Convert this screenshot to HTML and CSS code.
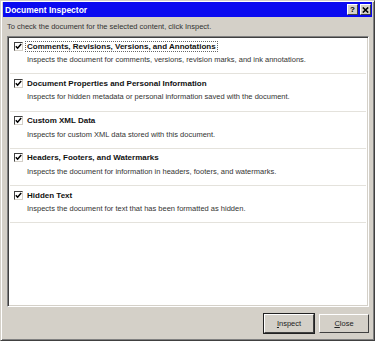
FILE: index.html
```html
<!DOCTYPE html>
<html>
	<head>
		<title>Document Inspector</title>
		<meta charset="UTF-8">
		<link rel="stylesheet" href="styles.css">
	</head>
	<body>
		<div class="window">
			<div class="titleBar">
				<span class="titleText">Document Inspector</span>
				<div class="titleButtons">
					<div class="titleButton">?</div>
					<div class="titleButton">
						<svg width="7" height="6" viewBox="0 0 7 6"><path d="M0.8 0.5 L6.2 5.5 M6.2 0.5 L0.8 5.5" stroke="#000" stroke-width="1.6"/></svg>
					</div>
				</div>
			</div>
			<div class="content">
				<p class="intro">To check the document for the selected content, click Inspect.</p>
				<div class="panel">
					<div class="item">
						<div class="itemHead">
							<span class="check"><svg width="7" height="7" viewBox="0 0 7 7"><path d="M0.8 3.2 L2.6 5.2 L6.2 1" stroke="#000" stroke-width="1.5" fill="none"/></svg></span>
							<span class="itemTitle focused">Comments, Revisions, Versions, and Annotations</span>
						</div>
						<p class="itemDesc">Inspects the document for comments, versions, revision marks, and ink annotations.</p>
					</div>
					<div class="item">
						<div class="itemHead">
							<span class="check"><svg width="7" height="7" viewBox="0 0 7 7"><path d="M0.8 3.2 L2.6 5.2 L6.2 1" stroke="#000" stroke-width="1.5" fill="none"/></svg></span>
							<span class="itemTitle">Document Properties and Personal Information</span>
						</div>
						<p class="itemDesc">Inspects for hidden metadata or personal information saved with the document.</p>
					</div>
					<div class="item">
						<div class="itemHead">
							<span class="check"><svg width="7" height="7" viewBox="0 0 7 7"><path d="M0.8 3.2 L2.6 5.2 L6.2 1" stroke="#000" stroke-width="1.5" fill="none"/></svg></span>
							<span class="itemTitle">Custom XML Data</span>
						</div>
						<p class="itemDesc">Inspects for custom XML data stored with this document.</p>
					</div>
					<div class="item">
						<div class="itemHead">
							<span class="check"><svg width="7" height="7" viewBox="0 0 7 7"><path d="M0.8 3.2 L2.6 5.2 L6.2 1" stroke="#000" stroke-width="1.5" fill="none"/></svg></span>
							<span class="itemTitle">Headers, Footers, and Watermarks</span>
						</div>
						<p class="itemDesc">Inspects the document for information in headers, footers, and watermarks.</p>
					</div>
					<div class="item">
						<div class="itemHead">
							<span class="check"><svg width="7" height="7" viewBox="0 0 7 7"><path d="M0.8 3.2 L2.6 5.2 L6.2 1" stroke="#000" stroke-width="1.5" fill="none"/></svg></span>
							<span class="itemTitle">Hidden Text</span>
						</div>
						<p class="itemDesc">Inspects the document for text that has been formatted as hidden.</p>
					</div>
				</div>
				<div class="buttonRow">
					<div class="button default"><u>I</u>nspect</div>
					<div class="button"><u>C</u>lose</div>
				</div>
			</div>
		</div>
	</body>
</html>
```

FILE: styles.css
```css
body{
	margin: 0;
	font-family: "Liberation Sans", Arial, sans-serif;
	font-size: 7.5px;
	color: #333;
	background-color: #d4d0c8;
}
.window{
	height: 341px;
	box-sizing: border-box;
	display: flex;
	flex-direction: column;
	border: 1px solid #d4d0c8;
	border-right-color: #404040;
	border-bottom-color: #404040;
	box-shadow: inset 1px 1px 0 #ffffff, inset -1px -1px 0 #808080;
	padding: 2px;
	padding-top: 1px;
}
.titleBar{
	height: 15px;
	background-color: #0a0af0;
	color: white;
	display: flex;
	align-items: center;
	justify-content: space-between;
	padding: 0 1px 0 2px;
}
.titleText{
	font-weight: bold;
	font-size: 8.5px;
}
.titleButtons{
	display: flex;
}
.titleButton{
	width: 11px;
	height: 11px;
	box-sizing: border-box;
	background-color: #d4d0c8;
	color: black;
	font-weight: bold;
	font-size: 8px;
	line-height: 9px;
	border: 1px solid;
	border-color: #ffffff #404040 #404040 #ffffff;
	display: flex;
	align-items: center;
	justify-content: center;
	margin-left: 2px;
}
.content{
	flex: 1;
	display: flex;
	flex-direction: column;
	padding: 0 3px 2px 4px;
}
.intro{
	margin: 5px 0 4px 0;
	line-height: 10px;
}
.panel{
	flex: 1;
	background-color: white;
	border: 1px solid;
	border-color: #808080 #ffffff #ffffff #808080;
	box-shadow: inset 1px 1px 0 #404040, inset -1px -1px 0 #d4d0c8;
	padding: 0 2px;
}
.item{
	padding: 3px 4px 4px 4px;
	border-bottom: 1px solid #e4e2dc;
	height: 29.3px;
}
.itemHead{
	display: flex;
	align-items: center;
	height: 12px;
}
.check{
	width: 9px;
	height: 9px;
	box-sizing: border-box;
	border: 1px solid #404040;
	border-right-color: #d4d0c8;
	border-bottom-color: #d4d0c8;
	display: flex;
	align-items: center;
	justify-content: center;
	margin-right: 2px;
}
.itemTitle{
	font-weight: bold;
	font-size: 8px;
	color: #111;
	padding: 0 1px;
	border: 1px solid transparent;
}
.itemTitle.focused{
	border: 1px dotted #666;
}
.itemDesc{
	margin: 3px 0 0 13px;
	line-height: 10px;
}
.buttonRow{
	display: flex;
	justify-content: flex-end;
	gap: 5px;
	padding-top: 7px;
	padding-bottom: 3px;
}
.button{
	width: 50px;
	height: 19px;
	box-sizing: border-box;
	border: 1px solid;
	border-color: #ffffff #404040 #404040 #ffffff;
	display: flex;
	align-items: center;
	justify-content: center;
	color: #222;
}
.button.default{
	outline: 1px solid #222;
}
u{
	text-decoration: underline;
}
```
